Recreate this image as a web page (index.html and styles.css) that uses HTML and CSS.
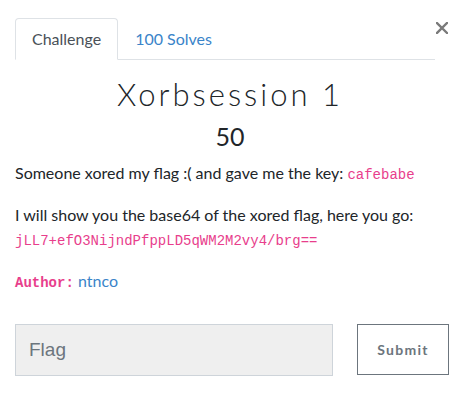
FILE: index.html
```html
<!DOCTYPE html>
<html lang="en">
<head>
<meta charset="utf-8">
<title>Xorbsession 1</title>
<link rel="stylesheet" href="styles.css">
</head>
<body>
<div class="modal">
  <div class="top">
    <nav class="tabs">
      <a class="tab active" href="#">Challenge</a>
      <a class="tab" href="#">100 Solves</a>
    </nav>
    <button class="close" type="button" aria-label="Close">
      <svg width="12" height="12" viewBox="0 0 12 12"><path d="M1 1 L11 11 M11 1 L1 11" stroke="#7a7a7a" stroke-width="2.4" stroke-linecap="square"/></svg>
    </button>
  </div>
  <h2 class="name">Xorbsession 1</h2>
  <h3 class="value">50</h3>
  <div class="desc">
    <p>Someone xored my flag :( and gave me the key: <code>cafebabe</code></p>
    <p>I will show you the base64 of the xored flag, here you go:<br><code>jLL7+efO3NijndPfppLD5qWM2M2vy4/brg==</code></p>
    <p><code class="author">Author:</code> <a class="link" href="#">ntnco</a></p>
  </div>
  <form class="answer">
    <input class="flag" type="text" placeholder="Flag">
    <button class="submit" type="button">Submit</button>
  </form>
</div>
</body>
</html>
```
FILE: styles.css
```css
html, body {
  margin: 0;
  padding: 0;
  background: #ffffff;
}
body {
  font-family: "Lato", "Open Sans", sans-serif;
  font-size: 16px;
  line-height: 24px;
  color: #212529;
}
.modal {
  padding: 18px 15px 0 15px;
}
.top {
  display: flex;
  align-items: flex-start;
}
.tabs {
  flex: 1;
  display: flex;
  border-bottom: 1px solid #dee2e6;
  max-width: 420px;
}
.tab {
  display: block;
  padding: 8px 16px;
  border: 1px solid transparent;
  border-top-left-radius: 4px;
  border-top-right-radius: 4px;
  margin-bottom: -1px;
  text-decoration: none;
  color: #3a84c9;
  line-height: 24px;
}
.tab.active {
  color: #495057;
  border-color: #dee2e6 #dee2e6 #ffffff;
  background: #fff;
}
.close {
  margin-left: auto;
  margin-right: 5px;
  margin-top: 4px;
  padding: 0;
  border: 0;
  background: transparent;
  width: 12px;
  height: 12px;
  line-height: 0;
}
.name {
  margin: 16px 8px 0 0;
  text-align: center;
  font-weight: 300;
  font-size: 31px;
  line-height: 36px;
  letter-spacing: 3px;
  color: #212529;
}
.value {
  margin: 9px 8px 0 0;
  text-align: center;
  font-weight: 400;
  font-size: 25px;
  line-height: 30px;
  color: #212529;
}
.desc {
  margin-top: 10px;
}
.desc p {
  margin: 0 0 16px 0;
}
code {
  font-family: "Liberation Mono", "DejaVu Sans Mono", monospace;
  font-size: 14px;
  color: #e83e8c;
}
.author {
  font-weight: 700;
}
.link {
  color: #3a84c9;
  text-decoration: none;
}
.answer {
  display: flex;
  align-items: flex-start;
  margin-top: 29px;
}
.flag {
  box-sizing: border-box;
  width: 318px;
  height: 52px;
  padding: 0 13px;
  border: 1px solid #ced4da;
  background: #efefef;
  font-family: "Liberation Sans", Arial, sans-serif;
  font-size: 19px;
  color: #495057;
  outline: none;
}
.flag::placeholder {
  color: #6c757d;
}
.submit {
  box-sizing: border-box;
  margin-left: 24px;
  width: 92px;
  height: 51px;
  border: 1px solid #6c757d;
  background: #fff;
  font-family: "Lato", sans-serif;
  font-weight: 700;
  font-size: 14px;
  letter-spacing: 1.3px;
  color: #6c757d;
  padding: 0;
}
```
